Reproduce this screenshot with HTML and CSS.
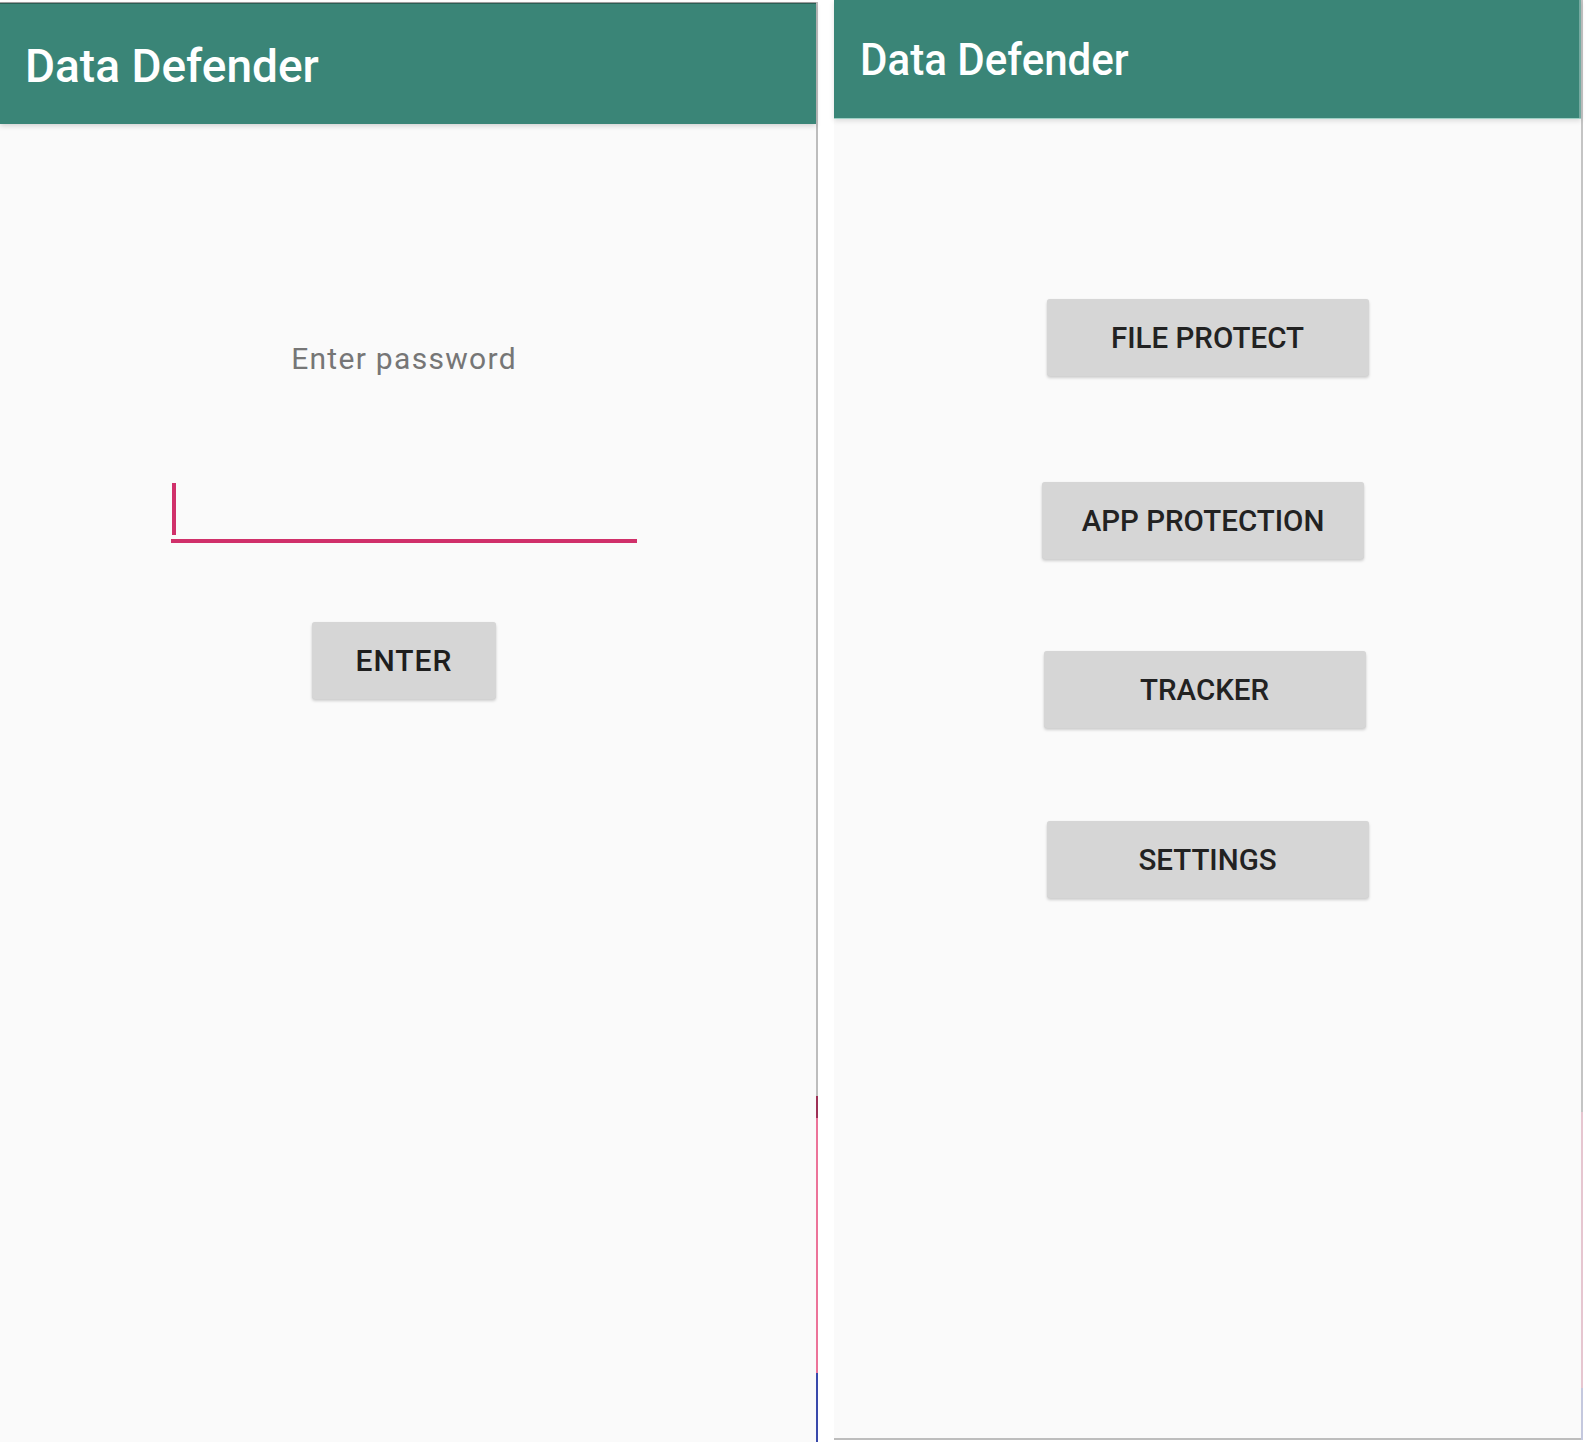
FILE: index.html
```html
<!DOCTYPE html>
<html lang="en">
<head>
<meta charset="utf-8">
<title>Data Defender</title>
<link rel="stylesheet" href="styles.css">
</head>
<body>
<div class="screens">
  <section class="phone phone-login">
    <header class="appbar appbar-login">
      <h1 class="title">Data Defender</h1>
    </header>
    <main class="login">
      <p class="prompt">Enter password</p>
      <div class="field"><span class="cursor"></span></div>
      <button class="btn btn-enter" type="button">ENTER</button>
    </main>
  </section>
  <div class="edge edge-left"></div>
  <section class="phone phone-menu">
    <header class="appbar appbar-menu">
      <h1 class="title title-menu">Data Defender</h1>
    </header>
    <main class="menu">
      <button class="btn btn-menu btn-file" type="button">FILE PROTECT</button>
      <button class="btn btn-menu btn-app" type="button">APP PROTECTION</button>
      <button class="btn btn-menu btn-tracker" type="button">TRACKER</button>
      <button class="btn btn-menu btn-settings" type="button">SETTINGS</button>
    </main>
  </section>
  <div class="edge edge-right"></div>
</div>
</body>
</html>
```
FILE: styles.css
```css
* { box-sizing: border-box; }

html, body {
  margin: 0;
  padding: 0;
  background: #ffffff;
}

body {
  font-family: Roboto, "Noto Sans", sans-serif;
  width: 1592px;
  height: 1452px;
  overflow: hidden;
}

.screens {
  display: flex;
  align-items: flex-start;
}

.phone {
  background: #fafafa;
  display: flex;
  flex-direction: column;
}

.phone-login {
  width: 816px;
  height: 1440px;
  margin-top: 2px;
  border-top: 1px solid #a2a2a2;
}

.phone-menu {
  width: 747px;
  height: 1440px;
  margin-left: 16px;
  border-bottom: 2px solid #bdbdbd;
}

.edge {
  width: 2px;
}

.edge-left {
  height: 1440px;
  margin-top: 2px;
  background: linear-gradient(to bottom,
    #bdbdbd 0, #bdbdbd 1094px,
    #9e3056 1094px, #9e3056 1116px,
    #ec7399 1116px, #ec7399 1371px,
    #3949ab 1371px, #3949ab 100%);
}

.edge-right {
  height: 1440px;
  background: linear-gradient(to bottom,
    #c4c4c4 0, #c4c4c4 1112px,
    #e6c6d0 1112px, #e6c6d0 1388px,
    #c4c8de 1388px, #c4c8de 100%);
}

.appbar {
  background: #3a8577;
  flex: none;
  position: relative;
  z-index: 1;
}

.appbar-login {
  height: 121px;
  border-top: 1px solid #2b5e54;
  padding: 39px 0 0 25px;
  box-shadow: 0 2px 5px rgba(0, 0, 0, 0.16);
}

.appbar-menu {
  height: 119px;
  border-bottom: 1px solid #9fd0c5;
  padding: 37px 0 0 26px;
  box-shadow: inset -2px 0 0 rgba(255, 255, 255, 0.3), 0 2px 5px rgba(0, 0, 0, 0.12);
}

.title {
  margin: 0;
  color: #ffffff;
  font-weight: 500;
  font-size: 46px;
  line-height: 46px;
  white-space: nowrap;
}

.title-menu {
  display: inline-block;
  font-size: 45px;
  line-height: 45px;
  transform: scaleX(0.935);
  transform-origin: left center;
}

.login {
  display: flex;
  flex-direction: column;
  align-items: center;
  padding-right: 8px;
}

.prompt {
  margin: 217px 0 0;
  font-size: 30px;
  line-height: 36px;
  letter-spacing: 1.3px;
  color: #767676;
}

.field {
  width: 466px;
  height: 60px;
  margin-top: 106px;
  border-bottom: 4px solid #d0306a;
}

.cursor {
  display: block;
  width: 4px;
  height: 52px;
  margin-left: 1px;
  background: #d0306a;
}

.btn {
  font-family: Roboto, "Noto Sans", sans-serif;
  font-weight: 500;
  font-size: 30px;
  letter-spacing: 1px;
  color: #1e1e1e;
  background: #d6d6d6;
  border: none;
  border-radius: 3px;
  box-shadow: 0 2px 3px rgba(0, 0, 0, 0.18), 0 0 1px rgba(0, 0, 0, 0.08);
  padding: 0;
  display: flex;
  align-items: center;
  justify-content: center;
}

.btn-enter {
  width: 184px;
  height: 77px;
  margin-top: 79px;
}

.menu {
  display: flex;
  flex-direction: column;
  align-items: center;
  padding-top: 180px;
}

.btn-menu {
  width: 322px;
  height: 77px;
  font-size: 29.5px;
  letter-spacing: 0;
  color: #222222;
}

.btn-app {
  margin-top: 106px;
  margin-right: 9px;
}

.btn-tracker {
  margin-top: 92px;
  margin-right: 6px;
}

.btn-settings {
  margin-top: 93px;
}
```
